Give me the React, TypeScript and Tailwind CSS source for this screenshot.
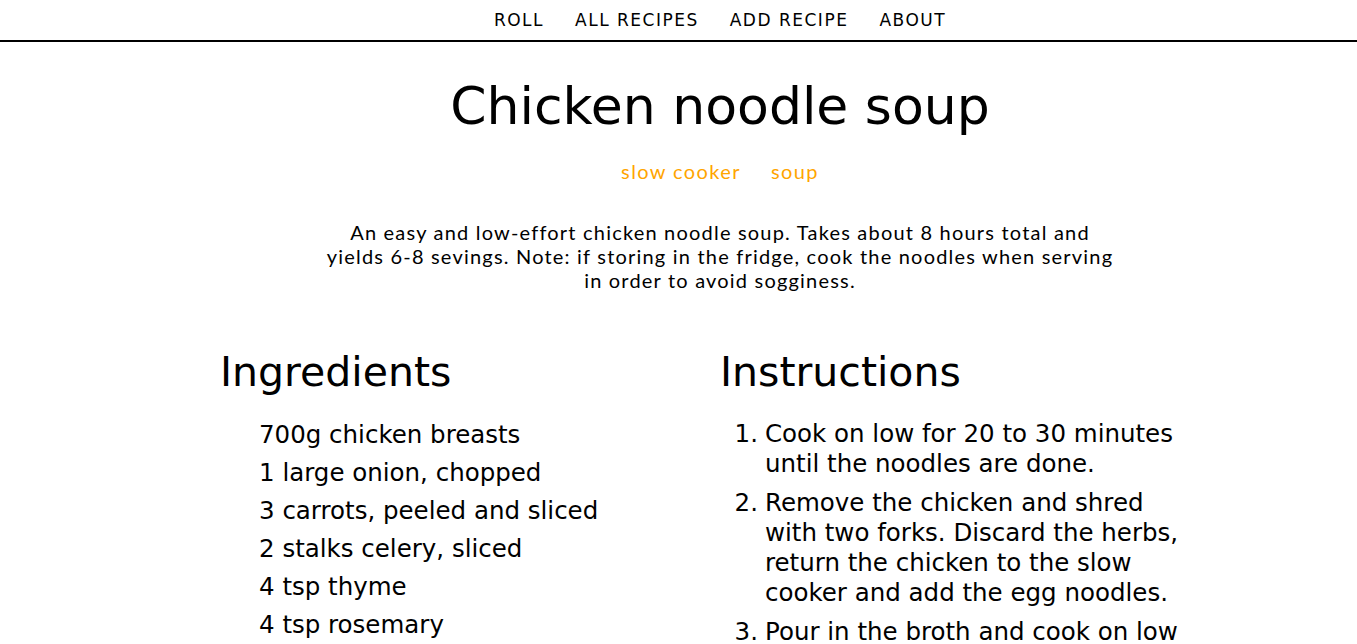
import React from "react";

const mont = { fontFamily: '"DejaVu Sans", sans-serif' };
const lato = { fontFamily: 'Lato, sans-serif' };

export default function App() {
  const ingredients = [
    "700g chicken breasts",
    "1 large onion, chopped",
    "3 carrots, peeled and sliced",
    "2 stalks celery, sliced",
    "4 tsp thyme",
    "4 tsp rosemary",
    "2 bay leaves",
    "1.5L chicken broth",
    "300g egg noodles",
  ];
  const steps = [
    "Cook on low for 20 to 30 minutes until the noodles are done.",
    "Remove the chicken and shred with two forks. Discard the herbs, return the chicken to the slow cooker and add the egg noodles.",
    "Pour in the broth and cook on low for 8 hours.",
  ];
  return (
    <div className="min-h-screen bg-white text-black" style={mont}>
      <nav className="h-[42px] border-b-2 border-black flex justify-center items-center pl-[83px]">
        <div className="flex gap-[31px] text-[17px] tracking-[1.5px] pt-[1px]">
          <span>ROLL</span>
          <span>ALL RECIPES</span>
          <span>ADD RECIPE</span>
          <span>ABOUT</span>
        </div>
      </nav>
      <div className="pl-[83px] flex flex-col items-center">
        <h1 className="mt-[29px] text-[52px] leading-[70px] font-normal">Chicken noodle soup</h1>
        <div className="mt-[15px] flex gap-[30px] text-[20px] tracking-[1.4px] text-[#ffa500]" style={lato}>
          <span>slow cooker</span>
          <span>soup</span>
        </div>
        <p className="mt-[34px] w-[800px] text-center text-[20px] leading-[24px] tracking-[1.2px]" style={lato}>
          An easy and low-effort chicken noodle soup. Takes about 8 hours total and yields 6-8 sevings. Note: if storing in the fridge, cook the noodles when serving in order to avoid sogginess.
        </p>
        <div className="mt-[50px] w-[1000px] flex">
          <div className="w-[500px]">
            <h2 className="text-[41px] leading-[60px]">Ingredients</h2>
            <ul className="mt-[14px] pl-[39px] text-[24.5px] leading-[38px]">
              {ingredients.map((i) => (
                <li key={i}>{i}</li>
              ))}
            </ul>
          </div>
          <div className="w-[500px]">
            <h2 className="text-[41px] leading-[60px]">Instructions</h2>
            <ol className="mt-[17px] pr-[35px] text-[24.5px] leading-[30px]">
              {steps.map((s, idx) => (
                <li key={s} className="mb-[9px] flex">
                  <span className="w-[45px] shrink-0 text-right pr-[7px]">{idx + 1}.</span>
                  <span>{s}</span>
                </li>
              ))}
            </ol>
          </div>
        </div>
      </div>
    </div>
  );
}
